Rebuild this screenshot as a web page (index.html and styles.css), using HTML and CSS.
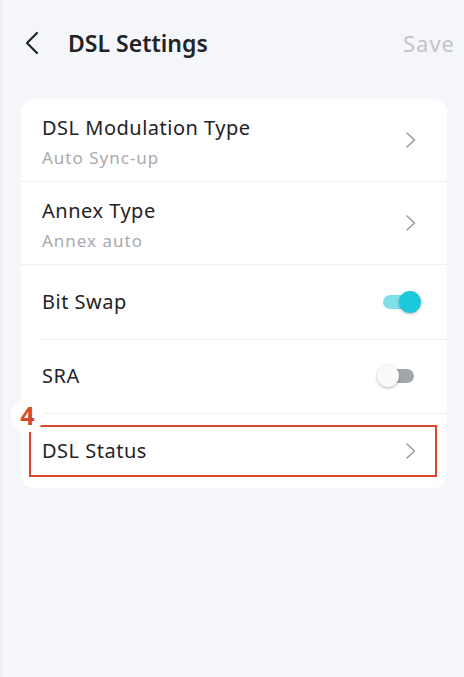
FILE: index.html
```html
<!DOCTYPE html>
<html>
<head>
<meta charset="utf-8">
<link rel="stylesheet" href="styles.css">
</head>
<body>
<div class="page">
  <header class="topbar">
    <svg class="back" width="16" height="24" viewBox="0 0 16 24"><path d="M13 2 L3 12 L13 22" fill="none" stroke="#1f2326" stroke-width="2.2" stroke-linecap="round" stroke-linejoin="round"/></svg>
    <h1 class="title">DSL Settings</h1>
    <span class="save">Save</span>
  </header>
  <section class="card">
    <div class="row tall">
      <div class="texts">
        <div class="label">DSL Modulation Type</div>
        <div class="sub">Auto Sync-up</div>
      </div>
      <svg class="chev" width="12" height="18" viewBox="0 0 12 18"><path d="M2 2 L9.5 9 L2 16" fill="none" stroke="#9a9ca0" stroke-width="1.6" stroke-linecap="round" stroke-linejoin="round"/></svg>
    </div>
    <div class="row tall">
      <div class="texts">
        <div class="label">Annex Type</div>
        <div class="sub">Annex auto</div>
      </div>
      <svg class="chev" width="12" height="18" viewBox="0 0 12 18"><path d="M2 2 L9.5 9 L2 16" fill="none" stroke="#9a9ca0" stroke-width="1.6" stroke-linecap="round" stroke-linejoin="round"/></svg>
    </div>
    <div class="row inset">
      <div class="label">Bit Swap</div>
      <span class="toggle on"><span class="knob"></span></span>
    </div>
    <div class="row inset">
      <div class="label">SRA</div>
      <span class="toggle off"><span class="knob"></span></span>
    </div>
    <div class="row last">
      <div class="label">DSL Status</div>
      <svg class="chev" width="12" height="18" viewBox="0 0 12 18"><path d="M2 2 L9.5 9 L2 16" fill="none" stroke="#9a9ca0" stroke-width="1.6" stroke-linecap="round" stroke-linejoin="round"/></svg>
      <span class="highlight"></span>
      <span class="badge">4</span>
    </div>
  </section>
</div>
</body>
</html>
```
FILE: styles.css
```css
* { box-sizing: border-box; }
html, body { margin: 0; padding: 0; }
body {
  background: #f5f6fa;
  font-family: "Noto Sans", "Lato", sans-serif;
  color: #1f2326;
  width: 464px;
  height: 677px;
  border-left: 2px solid #eceef3;
}
.page { padding: 0 17px 0 19px; }
.topbar {
  height: 99px;
  display: flex;
  align-items: center;
  padding-bottom: 14px;
}
.back { margin-left: 3px; margin-right: 28px; }
.title {
  margin: 0;
  font-size: 23px;
  font-weight: 600;
  flex: 1;
}
.save {
  font-size: 22px;
  letter-spacing: 1px;
  color: #c3c4c8;
  margin-right: -8px;
}
.card {
  background: #fff;
  border-radius: 14px;
}
.row {
  position: relative;
  display: flex;
  align-items: center;
  justify-content: space-between;
  padding: 0 30px 0 21px;
  height: 74px;
}
.row.tall { height: 83px; border-bottom: 1px solid #eeeff2; padding-top: 4px; }
.row.tall .chev { margin-top: -4px; }
.row.inset + .row::before {
  content: "";
  position: absolute;
  top: 0; left: 20px; right: 0;
  height: 1px;
  background: #eeeff2;
}
.row.last { height: 75px; }
.label { font-size: 20px; letter-spacing: 0.5px; line-height: 26px; }
.sub { font-size: 17px; letter-spacing: 1px; color: #a8a9ad; margin-top: 6px; line-height: 22px; }
.toggle {
  position: relative;
  width: 36px;
  height: 14px;
  border-radius: 7px;
  margin-right: -2px;
}
.toggle.on { background: #7fe0ea; }
.toggle.off { background: #a4a7a9; margin-right: 3px; }
.knob {
  position: absolute;
  top: -4px;
  width: 22px;
  height: 22px;
  border-radius: 50%;
  box-shadow: 0 1px 3px rgba(0,0,0,0.3);
}
.toggle.on .knob { right: -2px; background: #1dc8dc; }
.toggle.off .knob { left: -1px; background: #fafafa; }
.highlight {
  position: absolute;
  left: 8px; right: 10px; top: 12px; bottom: 11px;
  border: 2px solid #d9472b;
}
.badge {
  position: absolute;
  left: -10px;
  top: -14px;
  width: 33px;
  height: 33px;
  border-radius: 16px;
  background: #fff;
  color: #d9472b;
  font-weight: 700;
  font-size: 25px;
  line-height: 33px;
  text-align: center;
}
```
